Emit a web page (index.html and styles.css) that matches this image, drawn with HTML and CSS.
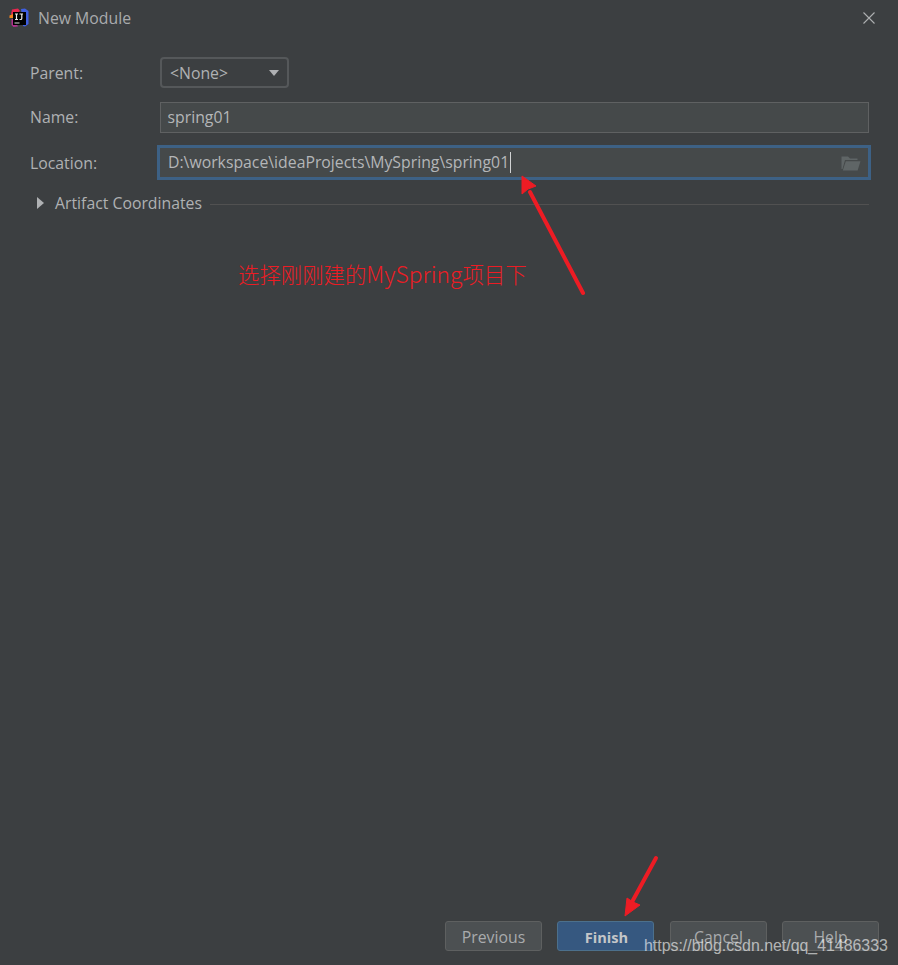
FILE: index.html
```html
<!DOCTYPE html>
<html lang="en">
<head>
<meta charset="utf-8">
<title>New Module</title>
<link rel="stylesheet" href="styles.css">
</head>
<body>
<div class="dialog">
  <header class="titlebar">
    <svg class="app-icon" width="20" height="20" viewBox="0 0 20 20" aria-hidden="true">
      <path d="M3 1.5 L9 0.5 L11 3 L4 8 L2 6 Z" fill="#e8264f"/>
      <path d="M12 1 L16 0.5 L19.5 3 L19.5 16 L16 18.5 L14 18 Z" fill="#3f5fe0"/>
      <path d="M0.5 7.5 L4 6 L4 10 L0.5 10 Z" fill="#f7841e"/>
      <path d="M2.5 11 L5 11 L9 18.5 L4.5 19 L2.5 17 Z" fill="#b0318f"/>
      <rect x="4" y="4" width="13" height="13" fill="#000"/>
      <rect x="5.5" y="14.5" width="5" height="1" fill="#ddd"/>
      <path d="M6 6 H9 M7.5 6 V11.5 M6 11.5 H9 M10.5 6 H14 M12.8 6 V10.5 Q12.8 11.5 11.6 11.5 H10.5" stroke="#eee" stroke-width="1.2" fill="none"/>
    </svg>
    <span class="title">New Module</span>
    <svg class="close" width="12" height="12" viewBox="0 0 12 12" aria-hidden="true">
      <path d="M0.5 0.5 L11.5 11.5 M11.5 0.5 L0.5 11.5" stroke="#aeb0b1" stroke-width="1.1" fill="none"/>
    </svg>
  </header>

  <main class="form">
    <div class="row row-parent">
      <label class="label">Parent:</label>
      <div class="select">
        <span>&lt;None&gt;</span>
        <i class="caret"></i>
      </div>
    </div>
    <div class="row row-name">
      <label class="label">Name:</label>
      <div class="input">spring01</div>
    </div>
    <div class="row row-location">
      <label class="label">Location:</label>
      <div class="input focused">
        <span class="value">D:\workspace\ideaProjects\MySpring\spring01</span><i class="cursor"></i>
        <svg class="folder" width="20" height="15" viewBox="0 0 20 15" aria-hidden="true">
          <path d="M0.5 13 V0.5 H7 L9 2.5 H16.5 V4 H4 L1.5 13 Z" fill="#5f6566"/>
          <path d="M4.8 5.2 H19.5 L16.6 14.5 H1.8 Z" fill="#5f6566"/>
        </svg>
      </div>
    </div>
    <div class="artifact">
      <i class="triangle"></i>
      <span>Artifact Coordinates</span>
      <i class="rule"></i>
    </div>
  </main>

  <footer class="buttons">
    <button class="btn">Previous</button>
    <button class="btn primary">Finish</button>
    <button class="btn">Cancel</button>
    <button class="btn">Help</button>
  </footer>

  <div class="note">选择刚刚建的<span class="note-latin">MySpring</span>项目下</div>
  <div class="watermark">https://blog.csdn.net/qq_41486333</div>

  <svg class="arrow-layer" width="898" height="965" viewBox="0 0 898 965" aria-hidden="true">
    <path d="M583 293 L530 192" stroke="#ed1c24" stroke-width="4" stroke-linecap="round" fill="none"/>
    <path d="M522 176 L522 194 L528 189 L536 186 Z" fill="#ed1c24" stroke="#ed1c24" stroke-width="1" stroke-linejoin="round"/>
    <path d="M656 858 L632 902" stroke="#ed1c24" stroke-width="4" stroke-linecap="round" fill="none"/>
    <path d="M625 916 L640 905 L633 902 L627 898 Z" fill="#ed1c24" stroke="#ed1c24" stroke-width="1" stroke-linejoin="round"/>
  </svg>
</div>
</body>
</html>
```
FILE: styles.css
```css
* { box-sizing: border-box; }
html, body { margin: 0; padding: 0; }
body {
  background: #3c3f41;
  color: #afb1b3;
  font-family: "Open Sans", "Noto Sans", sans-serif;
  font-size: 15.8px;
}
.dialog {
  position: relative;
  width: 898px;
  height: 965px;
  display: flex;
  flex-direction: column;
  background: #3c3f41;
  overflow: hidden;
}
.titlebar {
  height: 36px;
  display: flex;
  align-items: center;
  padding: 0 23px 0 9px;
  flex: none;
}
.app-icon { flex: none; margin-right: 9px; }
.title { flex: 1; color: #a9abad; }
.close { flex: none; }

.form {
  flex: 1;
  padding: 21px 29px 0 30px;
  display: flex;
  flex-direction: column;
}
.row { display: flex; align-items: center; }
.label { width: 130px; flex: none; }
.row-name { margin-top: 14px; }
.row-location { margin-top: 15px; }

.select {
  width: 129px;
  height: 31px;
  border: 2px solid #55585a;
  border-radius: 4px;
  background: #3c3f41;
  padding: 0 8px;
  display: flex;
  align-items: center;
  justify-content: space-between;
}
.caret {
  width: 0;
  height: 0;
  border-left: 5.5px solid transparent;
  border-right: 5.5px solid transparent;
  border-top: 6px solid #afb1b3;
}
.input {
  position: relative;
  flex: 1;
  height: 31px;
  border: 1.5px solid #5f6162;
  background: #45494a;
  padding: 0 6.5px 1px;
  display: flex;
  align-items: center;
  color: #b4b6b8;
}
.row-name .label { padding-bottom: 1px; }
.input.focused {
  height: 29px;
  border: 0;
  outline: 3px solid #3d6185;
  outline-offset: 0;
  padding: 0 8px 1px;
  margin-right: 1px;
}
.cursor {
  width: 1px;
  height: 21px;
  background: #d0d2d3;
  flex: none;
  margin-left: 1px;
}
.folder { position: absolute; right: 7px; top: 8px; }
.artifact {
  display: flex;
  align-items: center;
  margin-top: 16px;
  height: 20px;
  padding-left: 7px;
}
.triangle {
  width: 0;
  height: 0;
  border-top: 6px solid transparent;
  border-bottom: 6px solid transparent;
  border-left: 7px solid #afb1b3;
  margin-right: 11px;
  flex: none;
}
.rule { flex: 1; height: 1px; background: #515151; margin: 2px 0 0 8px; }

.buttons {
  flex: none;
  display: flex;
  justify-content: flex-end;
  gap: 15px;
  padding: 0 19px 14px 0;
}
.btn {
  width: 97px;
  height: 30px;
  border: 1px solid #5e6060;
  border-radius: 3px;
  background: #4c5052;
  color: #a9abad;
  font: inherit;
  padding: 2px 0 0;
}
.btn.primary {
  background: #365880;
  border-color: #4c708c;
  color: #c4c6c8;
  font-size: 14.6px;
  font-weight: 700;
  margin-right: 1px;
  padding-left: 2px;
}

.note {
  position: absolute;
  left: 238px;
  top: 259px;
  color: #ed1c24;
  font-family: "Noto Sans CJK SC", sans-serif;
  font-size: 21.4px;
  font-weight: 300;
  line-height: 30px;
  white-space: nowrap;
}
.note-latin { font-size: 22.8px; }
.watermark {
  position: absolute;
  left: 644px;
  top: 936px;
  color: rgba(255, 255, 255, 0.62);
  font-family: "Liberation Sans", sans-serif;
  font-size: 15.9px;
  line-height: 20px;
  white-space: nowrap;
}
.arrow-layer { position: absolute; left: 0; top: 0; pointer-events: none; }
```
